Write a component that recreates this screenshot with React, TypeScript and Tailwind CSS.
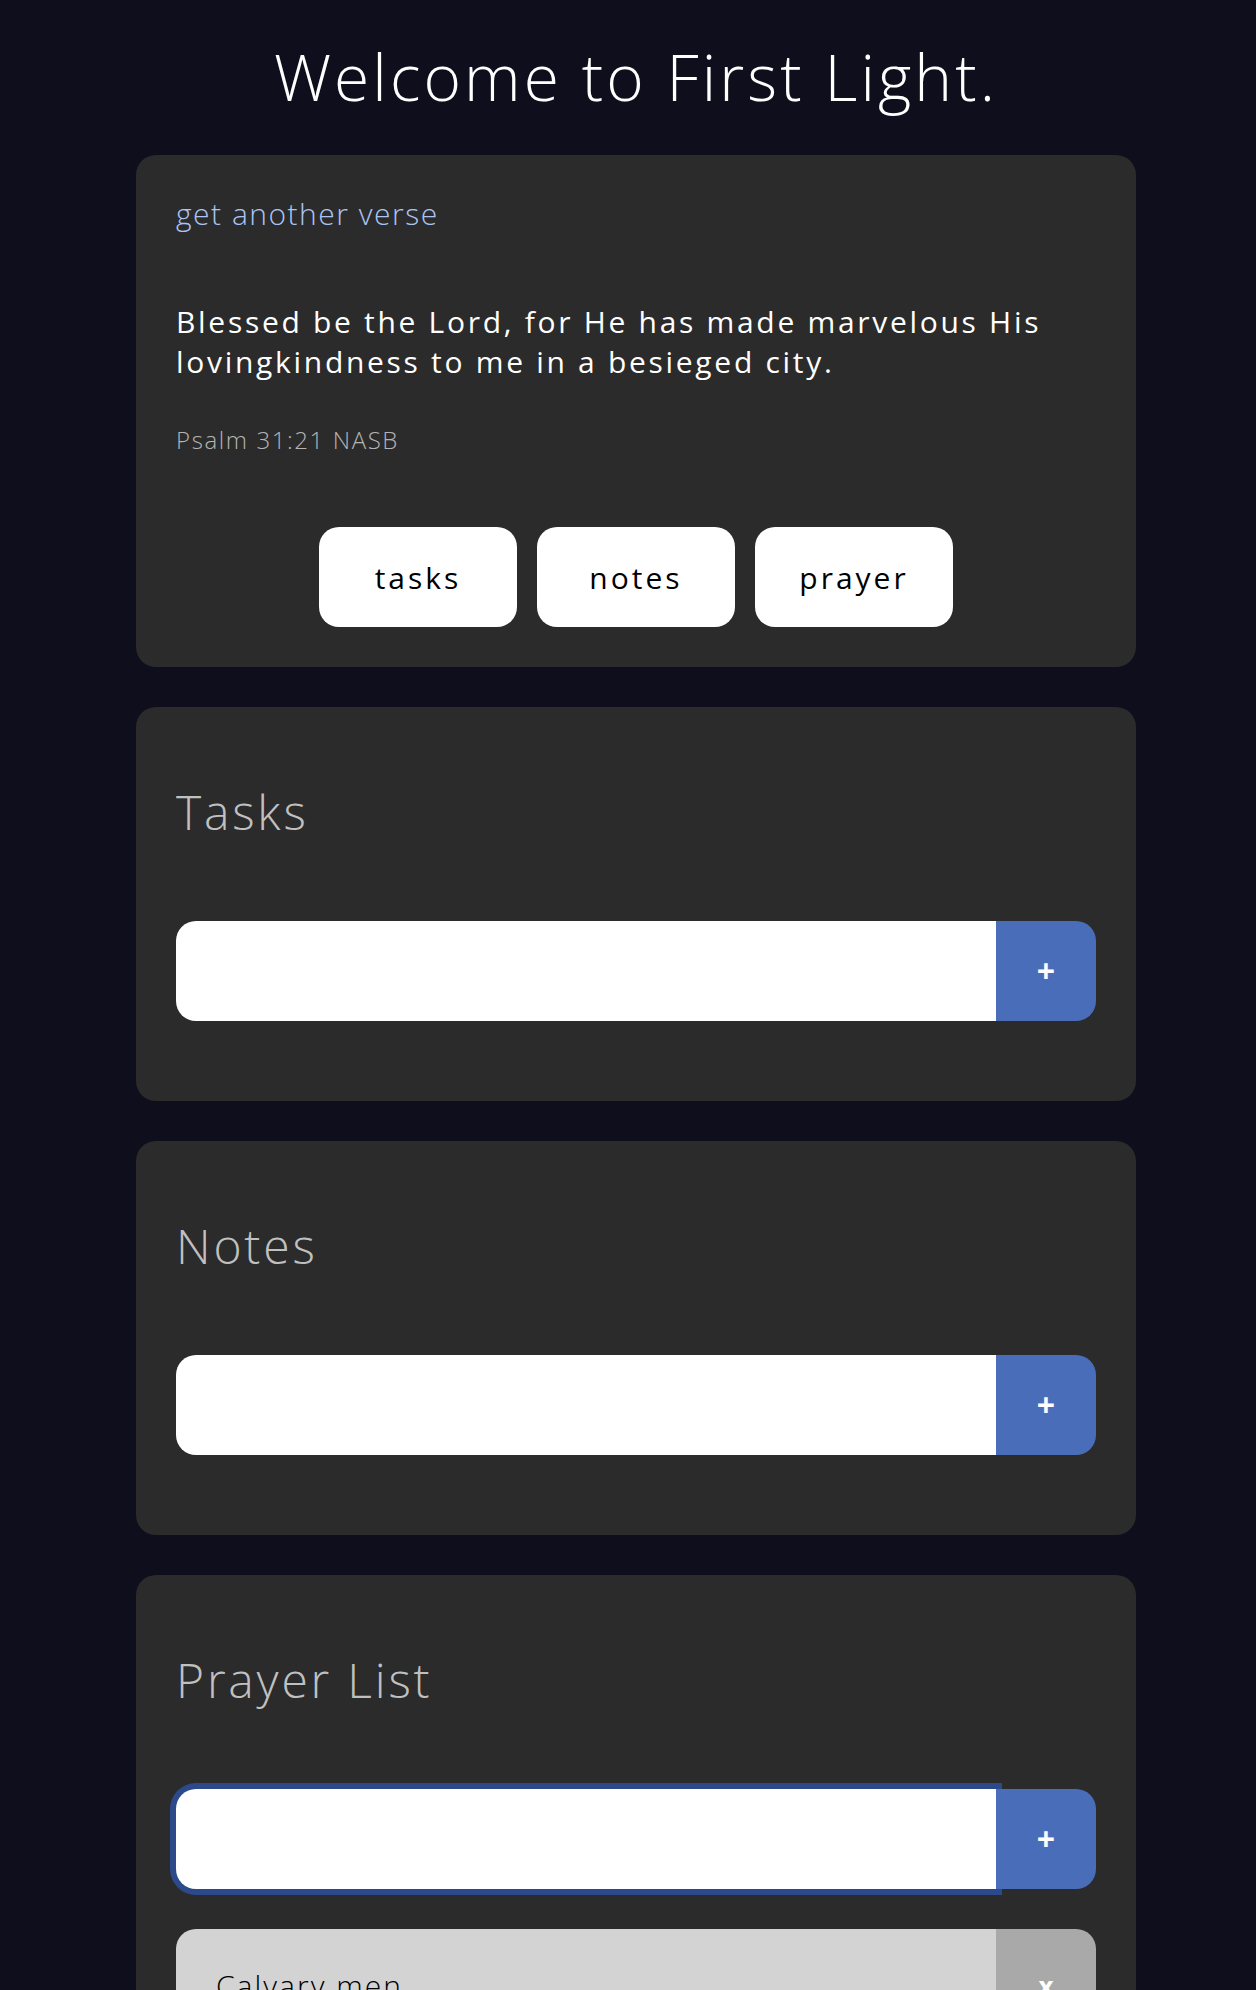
import { useState } from 'react'

const INPUT_ROW = 'flex h-[100px] w-full'

function AddRow({ focused = false }: { focused?: boolean }) {
  return (
    <div className={INPUT_ROW}>
      <input
        className={
          'h-full flex-1 rounded-l-[20px] bg-white px-[20px] text-[24px] text-black outline-none ' +
          (focused ? 'shadow-[0_0_0_6px_#2c4a8b]' : '')
        }
      />
      <button className="flex h-full w-[100px] items-center justify-center rounded-r-[20px] bg-[#4a6dba] text-[32px] font-bold leading-none text-white">
        +
      </button>
    </div>
  )
}

function Section({ title, children }: { title: string; children?: React.ReactNode }) {
  return (
    <section className="rounded-[20px] bg-[#2b2b2b] px-[40px] pt-[40px] pb-[80px]">
      <h2 className="mt-[41px] text-[48px] leading-none font-light tracking-[2.8px] text-[#c0c0c0]">{title}</h2>
      <div className="mt-[85px]">
        <AddRow focused={title === 'Prayer List'} />
      </div>
      {children}
    </section>
  )
}

export default function App() {
  const [prayers] = useState(['Calvary men'])

  return (
    <div className="h-[1990px] overflow-hidden bg-[#0e0e1c] font-['Open_Sans',_'Noto_Sans',_sans-serif] font-light">
      <div className="ml-[136px] w-[1000px] pt-[45px]">
        <h1 className="text-center text-[64px] leading-none font-light tracking-[3.1px] text-white">
          Welcome to First Light.
        </h1>

        {/* Verse card */}
        <div className="mt-[46px] rounded-[20px] bg-[#2b2b2b] px-[40px] pt-[40px] pb-[40px]">
          <button className="mt-[4px] block text-[30px] leading-[30px] tracking-[1.5px] text-[#abc4f3]">
            get another verse
          </button>
          <p className="mt-[73px] text-[30px] leading-[40px] font-normal tracking-[2.7px] text-white">
            Blessed be the Lord, for He has made marvelous His lovingkindness to me in a besieged city.
          </p>
          <p className="mt-[42px] text-[24px] leading-[32px] tracking-[1.6px] text-[#b4b4b4]">Psalm 31:21 NASB</p>
          <div className="mt-[71px] flex justify-center gap-[20px]">
            {['tasks', 'notes', 'prayer'].map((t) => (
              <button
                key={t}
                className="h-[100px] w-[198px] rounded-[20px] bg-white text-[30px] font-normal tracking-[3px] text-black"
              >
                {t}
              </button>
            ))}
          </div>
        </div>

        <div className="mt-[40px] flex flex-col gap-[40px]">
          <Section title="Tasks" />
          <Section title="Notes" />
          <Section title="Prayer List">
            <ul className="mt-[40px]">
              {prayers.map((p) => (
                <li key={p} className="flex">
                  <span className="flex-1 rounded-l-[20px] bg-[#d3d3d3] px-[40px] pt-[37px] pb-[37px] text-[30px] leading-[40px] tracking-[2px] text-black">
                    {p}
                  </span>
                  <button className="flex w-[100px] items-center justify-center rounded-r-[20px] bg-[#a9a9a9] text-[26px] font-bold text-white">
                    x
                  </button>
                </li>
              ))}
            </ul>
          </Section>
        </div>
      </div>
    </div>
  )
}
